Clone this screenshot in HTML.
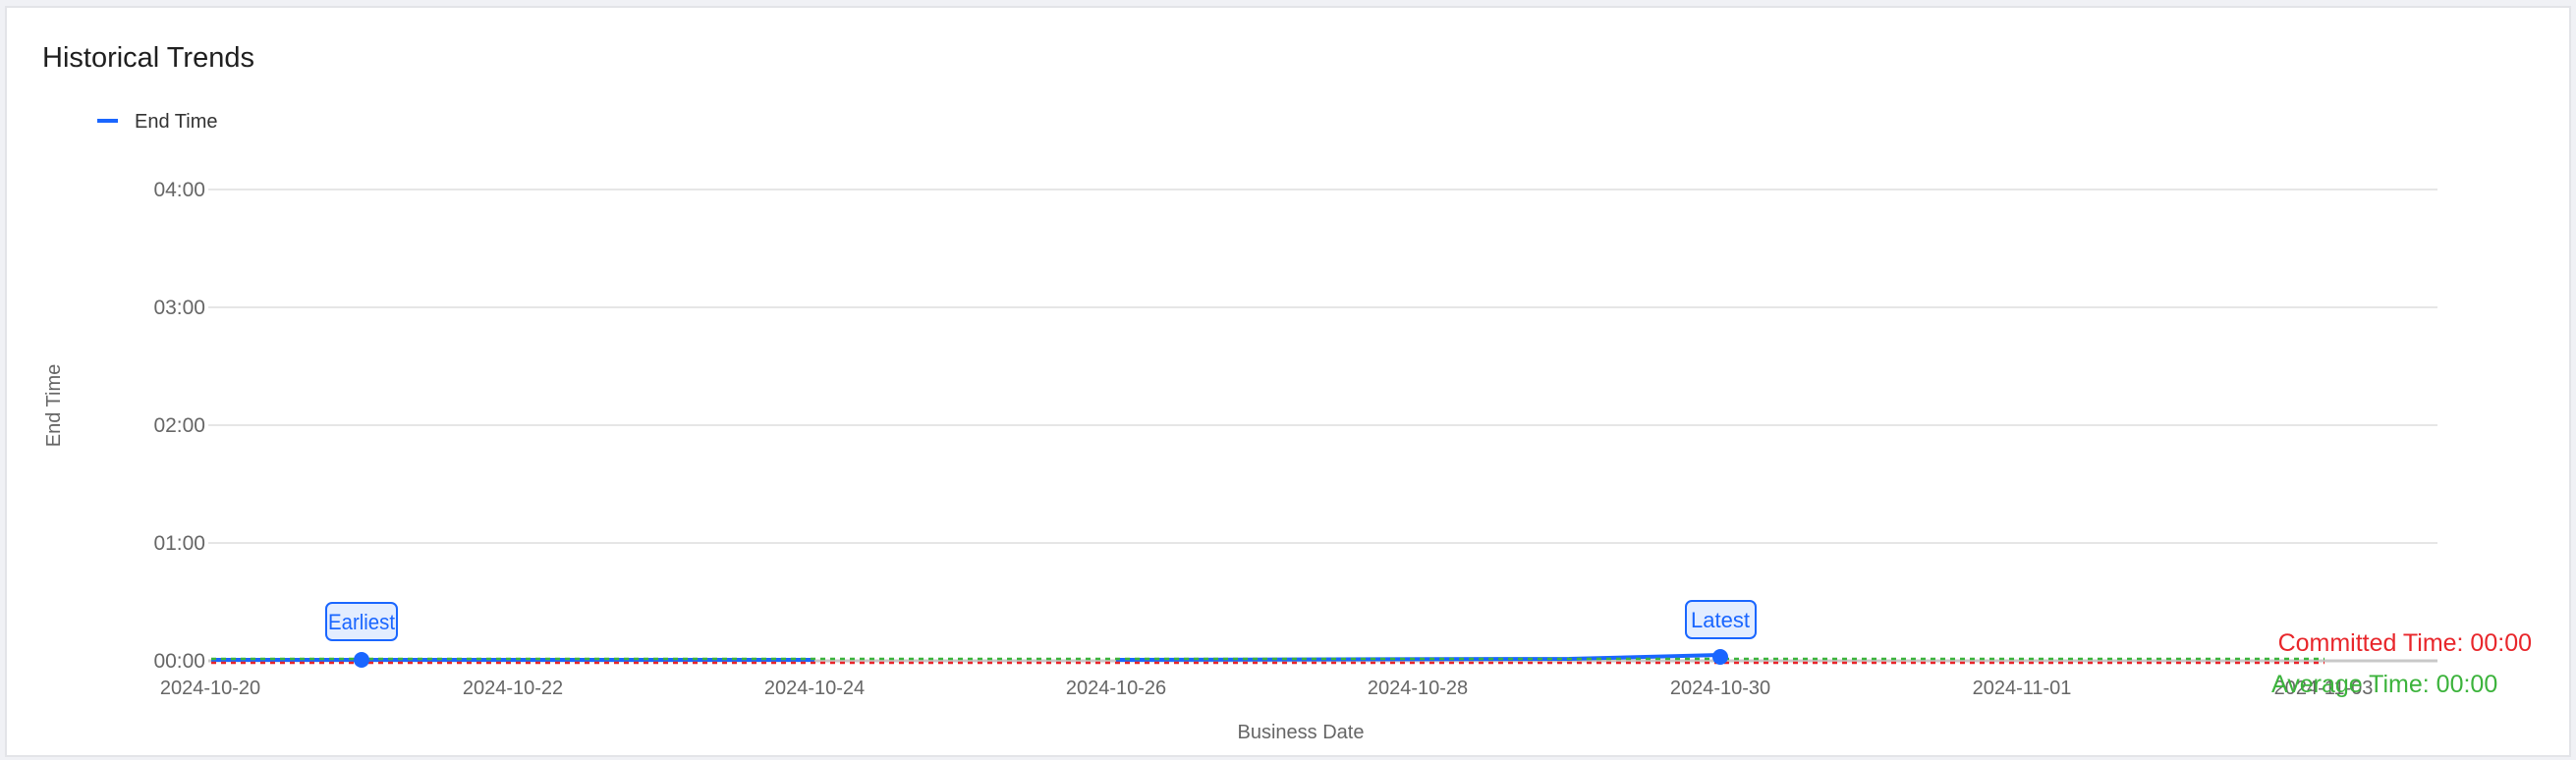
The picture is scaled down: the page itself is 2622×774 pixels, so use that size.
<!DOCTYPE html>
<html><head><meta charset="utf-8"><style>
html,body{margin:0;padding:0;background:#fff;width:2622px;height:774px;overflow:hidden}
svg{display:block;font-family:"Liberation Sans",Arial,sans-serif}
</style></head><body>
<svg width="2622" height="774" viewBox="0 0 2622 774">
<rect x="0" y="0" width="2622" height="774" fill="#f0f1f5"/>
<rect x="6" y="7" width="2610" height="763" fill="#fff" stroke="#e3e4e8" stroke-width="2"/>
<text x="43" y="68" font-size="29" fill="#1f1f1f">Historical Trends</text>
<line x1="99" y1="123" x2="120" y2="123" stroke="#1a66ff" stroke-width="4"/>
<text x="137" y="130" font-size="20" fill="#333">End Time</text>
<g stroke="#dedede" stroke-width="1.5">
<line x1="212" y1="193" x2="2481" y2="193"/>
<line x1="212" y1="313" x2="2481" y2="313"/>
<line x1="212" y1="433" x2="2481" y2="433"/>
<line x1="212" y1="553" x2="2481" y2="553"/>
</g>
<line x1="212" y1="673" x2="2481" y2="673" stroke="#c8c8c8" stroke-width="3"/>
<g font-size="21" fill="#666" text-anchor="end">
<text x="209" y="200">04:00</text>
<text x="209" y="320">03:00</text>
<text x="209" y="440">02:00</text>
<text x="209" y="560">01:00</text>
<text x="209" y="680">00:00</text>
</g>
<g font-size="20" fill="#666" text-anchor="middle">
<text x="214" y="707">2024-10-20</text>
<text x="522" y="707">2024-10-22</text>
<text x="829" y="707">2024-10-24</text>
<text x="1136" y="707">2024-10-26</text>
<text x="1443" y="707">2024-10-28</text>
<text x="1751" y="707">2024-10-30</text>
<text x="2058" y="707">2024-11-01</text>
<text x="2365" y="707">2024-11-03</text>
<text x="1324" y="752">Business Date</text>
</g>
<text transform="translate(61,413) rotate(-90)" font-size="20" fill="#666" text-anchor="middle">End Time</text>
<polyline points="215,672 829,672" fill="none" stroke="#1a66ff" stroke-width="4"/>
<polyline points="1136,672 1597,671 1751,667" fill="none" stroke="#1a66ff" stroke-width="4"/>
<line x1="215" y1="671" x2="2366" y2="671" stroke="#3cb33c" stroke-width="2.5" stroke-dasharray="5,5"/>
<line x1="215" y1="675" x2="2366" y2="675" stroke="#e8262b" stroke-width="2.5" stroke-dasharray="5,5"/>
<circle cx="368" cy="672" r="8" fill="#1a66ff"/>
<circle cx="1751" cy="669" r="8" fill="#1a66ff"/>
<rect x="332" y="614" width="72" height="38" rx="6" fill="#e3edff" stroke="#1a66ff" stroke-width="2"/>
<text x="368" y="641" font-size="22" fill="#1a66ff" text-anchor="middle" textLength="68" lengthAdjust="spacingAndGlyphs">Earliest</text>
<rect x="1716" y="612" width="71" height="38" rx="6" fill="#e3edff" stroke="#1a66ff" stroke-width="2"/>
<text x="1751" y="639" font-size="22" fill="#1a66ff" text-anchor="middle">Latest</text>
<text x="2577" y="663" font-size="25" fill="#e8262b" text-anchor="end">Committed Time: 00:00</text>
<text x="2312" y="705" font-size="25" fill="#3cb33c">Average Time: 00:00</text>
</svg>
</body></html>
